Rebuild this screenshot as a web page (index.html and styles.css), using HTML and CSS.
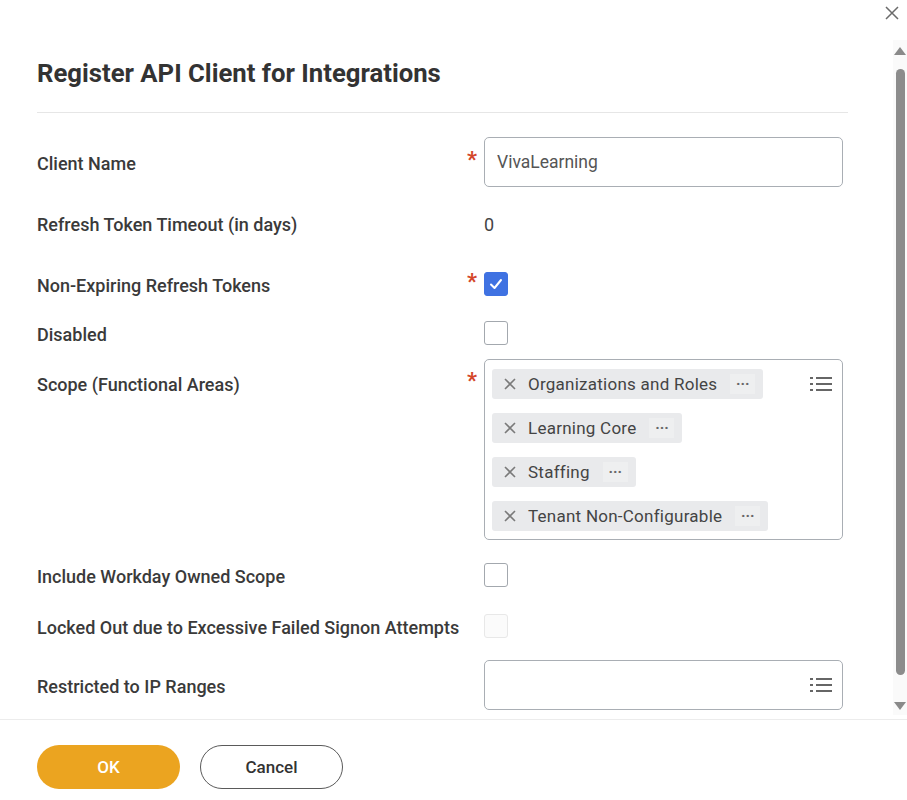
FILE: index.html
```html
<!DOCTYPE html>
<html lang="en">
<head>
<meta charset="utf-8">
<title>Register API Client for Integrations</title>
<link rel="stylesheet" href="styles.css">
</head>
<body>
<div class="dialog">
  <button class="close" aria-label="Close">
    <svg width="14" height="14" viewBox="0 0 14 14"><path d="M1 1 L13 13 M13 1 L1 13" stroke="#6b6b6b" stroke-width="1.5" fill="none"/></svg>
  </button>
  <div class="main">
    <div class="content">
      <h1 class="title">Register API Client for Integrations</h1>
      <div class="form">
        <div class="label lh-input">Client Name</div>
        <div class="req lh-input">*</div>
        <div class="field"><div class="input">VivaLearning</div></div>

        <div class="label lh-line">Refresh Token Timeout (in days)</div>
        <div class="req"></div>
        <div class="field value">0</div>

        <div class="label lh-line">Non-Expiring Refresh Tokens</div>
        <div class="req lh-line">*</div>
        <div class="field"><span class="checkbox checked"><svg width="14" height="12" viewBox="0 0 14 12"><path d="M2 6.5 L5.5 10 L12 2" stroke="#fff" stroke-width="2" fill="none" stroke-linecap="round" stroke-linejoin="round"/></svg></span></div>

        <div class="label lh-line">Disabled</div>
        <div class="req"></div>
        <div class="field"><span class="checkbox"></span></div>

        <div class="label scope-label">Scope (Functional Areas)</div>
        <div class="req scope-req">*</div>
        <div class="field">
          <div class="multi">
            <div class="pills">
              <div class="pill"><svg class="px" width="12" height="12" viewBox="0 0 12 12"><path d="M1 1 L11 11 M11 1 L1 11" stroke="#7a7a7a" stroke-width="1.6" fill="none"/></svg><span class="ptext">Organizations and Roles</span><span class="dots">···</span></div>
              <div class="pill"><svg class="px" width="12" height="12" viewBox="0 0 12 12"><path d="M1 1 L11 11 M11 1 L1 11" stroke="#7a7a7a" stroke-width="1.6" fill="none"/></svg><span class="ptext">Learning Core</span><span class="dots">···</span></div>
              <div class="pill"><svg class="px" width="12" height="12" viewBox="0 0 12 12"><path d="M1 1 L11 11 M11 1 L1 11" stroke="#7a7a7a" stroke-width="1.6" fill="none"/></svg><span class="ptext">Staffing</span><span class="dots">···</span></div>
              <div class="pill"><svg class="px" width="12" height="12" viewBox="0 0 12 12"><path d="M1 1 L11 11 M11 1 L1 11" stroke="#7a7a7a" stroke-width="1.6" fill="none"/></svg><span class="ptext">Tenant Non-Configurable</span><span class="dots">···</span></div>
            </div>
            <svg class="listicon" width="22" height="16" viewBox="0 0 22 16"><g fill="#666"><rect x="0" y="1" width="3" height="2"/><rect x="0" y="7" width="3" height="2"/><rect x="0" y="13" width="3" height="2"/><rect x="6" y="1" width="16" height="2"/><rect x="6" y="7" width="16" height="2"/><rect x="6" y="13" width="16" height="2"/></g></svg>
          </div>
        </div>

        <div class="label lh-line">Include Workday Owned Scope</div>
        <div class="req"></div>
        <div class="field"><span class="checkbox"></span></div>

        <div class="label lh-line">Locked Out due to Excessive Failed Signon Attempts</div>
        <div class="req"></div>
        <div class="field"><span class="checkbox disabled"></span></div>

        <div class="label lh-input">Restricted to IP Ranges</div>
        <div class="req"></div>
        <div class="field">
          <div class="input empty">
            <svg class="listicon" width="22" height="16" viewBox="0 0 22 16"><g fill="#666"><rect x="0" y="1" width="3" height="2"/><rect x="0" y="7" width="3" height="2"/><rect x="0" y="13" width="3" height="2"/><rect x="6" y="1" width="16" height="2"/><rect x="6" y="7" width="16" height="2"/><rect x="6" y="13" width="16" height="2"/></g></svg>
          </div>
        </div>
      </div>
    </div>
    <div class="scrollbar">
      <span class="arrow up"></span>
      <span class="thumb"></span>
      <span class="arrow down"></span>
    </div>
  </div>
  <div class="footer">
    <button class="btn ok">OK</button>
    <button class="btn cancel">Cancel</button>
  </div>
</div>
</body>
</html>
```

FILE: styles.css
```css
* { box-sizing: border-box; }
html, body { margin: 0; padding: 0; background: #fff; }
body {
  font-family: Roboto, "Noto Sans", "Liberation Sans", sans-serif;
  color: #333;
  width: 907px;
  height: 800px;
  overflow: hidden;
}
.dialog {
  position: relative;
  display: flex;
  flex-direction: column;
  height: 800px;
}
.close {
  position: absolute;
  top: 6px;
  right: 8px;
  width: 14px;
  height: 14px;
  padding: 0;
  border: 0;
  background: none;
  display: flex;
}
.main {
  display: flex;
  height: 720px;
  border-bottom: 1px solid #ececec;
}
.content {
  flex: 1;
  padding: 0 45px 0 37px;
}
.title {
  margin: 0;
  padding: 58px 0 24px;
  font-size: 25.7px;
  line-height: 30px;
  font-weight: 700;
  color: #333;
  border-bottom: 1px solid #e6e6e6;
}
.form {
  display: grid;
  grid-template-columns: 430px 17px 359px;
  grid-template-rows: 74px 61px 49px 38px 204px 51px 46px 50px;
  padding-top: 24px;
  font-size: 18px;
}
.label {
  font-weight: 500;
  color: #3a3a3a;
  white-space: nowrap;
  padding-top: 2px;
}
.lh-input { line-height: 50px; }
.lh-line { line-height: 24px; }
.req {
  color: #d4472a;
  font-size: 22px;
  font-weight: 700;
  margin-top: -2px;
}
.req.lh-line { line-height: 24px; }
.req.lh-input { line-height: 50px; }
.scope-label { padding-top: 14px; line-height: 24px; }
.scope-req { padding-top: 12px; line-height: 24px; }
.field { display: flex; align-items: flex-start; }
.value { line-height: 24px; color: #444; padding-top: 2px; }
.input {
  width: 359px;
  height: 50px;
  border: 1px solid #a9aeb4;
  border-radius: 5px;
  padding: 0 12px;
  display: flex;
  align-items: center;
  color: #555;
  font-size: 17.5px;
}
.input.empty { justify-content: flex-end; padding-right: 10px; }
.checkbox {
  width: 24px;
  height: 24px;
  border: 1.5px solid #a3a8ae;
  border-radius: 3px;
  display: flex;
  align-items: center;
  justify-content: center;
  background: #fff;
}
.checkbox.checked { background: #3f72e2; border-color: #3f72e2; }
.checkbox.disabled { border-color: #e8e8e8; background: #fbfbfb; border-width: 1px; }
.multi {
  width: 359px;
  height: 181px;
  border: 1px solid #a9aeb4;
  border-radius: 5px;
  padding: 9px 10px 0 7px;
  display: flex;
  justify-content: space-between;
  align-items: flex-start;
}
.pills {
  display: flex;
  flex-direction: column;
  align-items: flex-start;
  gap: 14px;
}
.pill {
  height: 30px;
  background: #e9eaec;
  border-radius: 3px;
  display: inline-flex;
  align-items: center;
  padding: 0 8px 0 12px;
  color: #444;
  font-size: 17px;
  letter-spacing: 0.25px;
}
.px { margin-right: 12px; flex: none; }
.dots {
  margin-left: 13px;
  width: 25px;
  height: 20px;
  display: inline-flex;
  align-items: center;
  justify-content: center;
  background: #eeeff0;
  color: #666;
  font-size: 15px;
  letter-spacing: 0;
  font-weight: 700;
}
.multi .listicon { margin-top: 7px; }
.scrollbar {
  width: 14px;
  margin: 40px 0 4px;
  background: #fafafa;
  display: flex;
  flex-direction: column;
  align-items: center;
  padding-top: 7px;
}
.arrow {
  width: 0;
  height: 0;
  border-left: 6px solid transparent;
  border-right: 6px solid transparent;
}
.arrow.up { border-bottom: 8px solid #8a8a8a; }
.arrow.down { border-top: 8px solid #8a8a8a; margin-top: 27px; }
.thumb {
  width: 9px;
  height: 606px;
  margin-top: 14px;
  background: #8c8c8c;
  border-radius: 5px;
}
.footer {
  display: flex;
  gap: 20px;
  padding: 25px 0 0 37px;
}
.btn {
  width: 143px;
  height: 44px;
  border-radius: 22px;
  font-family: Roboto, "Noto Sans", "Liberation Sans", sans-serif;
  font-size: 17px;
  font-weight: 500;
  cursor: pointer;
}
.ok { background: #eba420; border: 0; color: #fff; }
.cancel { background: #fff; border: 1.5px solid #5a5a5a; color: #333; }
```
